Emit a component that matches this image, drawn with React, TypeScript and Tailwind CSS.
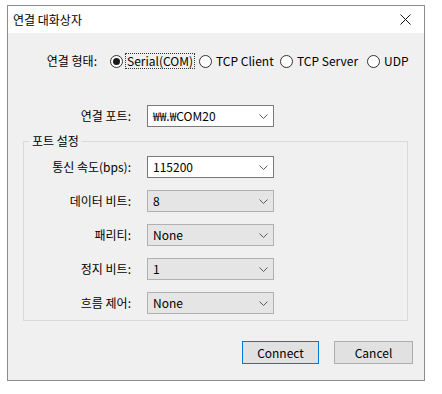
import React from "react";

const font = { fontFamily: '"Noto Sans CJK KR", "Noto Sans", sans-serif' };

function Chevron() {
  return (
    <svg width="9" height="5" viewBox="0 0 9 5" className="shrink-0">
      <path d="M0.5 0.5 L4.5 4.5 L8.5 0.5" fill="none" stroke="#5a5a5a" strokeWidth="1" />
    </svg>
  );
}

function Combo({ value, white }: { value: string; white?: boolean }) {
  return (
    <div
      className={
        "w-[127px] h-[22px] flex items-center justify-between pl-[5px] pr-[5px] border " +
        (white ? "bg-white border-[#7a7a7a]" : "bg-[#e5e5e5] border-[#b0b0b0]")
      }
    >
      <span className="leading-[16px]">{value}</span>
      <Chevron />
    </div>
  );
}

function Radio({ checked }: { checked?: boolean }) {
  return (
    <span className="w-[13px] h-[13px] rounded-full border border-[#333333] bg-white flex items-center justify-center shrink-0">
      {checked && <span className="w-[7px] h-[7px] rounded-full bg-[#1a1a1a]" />}
    </span>
  );
}

function Option({ label, checked, w, focus }: { label: string; checked?: boolean; w: string; focus?: boolean }) {
  return (
    <div className={"flex items-center " + w}>
      <Radio checked={checked} />
      <span
        className={
          "ml-[2px] leading-[14px] px-[1px] " +
          (focus ? "border border-dotted border-[#333333]" : "border border-transparent")
        }
      >
        {label}
      </span>
    </div>
  );
}

function Row({ label, value, white, first }: { label: string; value: string; white?: boolean; first?: boolean }) {
  return (
    <div className={"flex items-center " + (first ? "" : "mt-[12px]")}>
      <div className="w-[107px] text-right leading-[16px]">{label}</div>
      <div className="ml-[16px]">
        <Combo value={value} white={white} />
      </div>
    </div>
  );
}

export default function App() {
  return (
    <div className="w-[442px] h-[394px] bg-white pt-[5px] pl-[7px] text-[12px] text-black" style={font}>
      <div className="w-[418px] h-[376px] border border-[#8c8c8c] bg-[#f0f0f0] flex flex-col">
        <div className="h-[27px] bg-white flex items-center justify-between pl-[5px] pr-[13px]">
          <span className="leading-[16px]">연결 대화상자</span>
          <svg width="11" height="11" viewBox="0 0 11 11">
            <path d="M0.5 0.5 L10.5 10.5 M10.5 0.5 L0.5 10.5" stroke="#111" strokeWidth="1" />
          </svg>
        </div>

        <div className="flex items-center mt-[20px] h-[16px]">
          <div className="w-[89px] text-right leading-[16px]">연결 형태:</div>
          <div className="ml-[13px] flex items-center">
            <Option label="Serial(COM)" checked focus w="w-[89px]" />
            <Option label="TCP Client" w="w-[81px]" />
            <Option label="TCP Server" w="w-[87px]" />
            <Option label="UDP" w="w-[50px]" />
          </div>
        </div>

        <div className="flex items-center mt-[36px]">
          <div className="w-[123px] text-right leading-[16px]">연결 포트:</div>
          <div className="ml-[16px]">
            <Combo value="₩₩.₩COM20" white />
          </div>
        </div>

        <fieldset className="ml-[15px] w-[385px] mt-[6px] border border-[#d9d9d9] pb-[6px] pt-[7px]">
          <legend className="ml-[5px] px-[3px] leading-[16px]">포트 설정</legend>
          <Row label="통신 속도(bps):" value="115200" white first />
          <Row label="데이터 비트:" value="8" />
          <Row label="패리티:" value="None" />
          <Row label="정지 비트:" value="1" />
          <Row label="흐름 제어:" value="None" />
        </fieldset>

        <div className="flex justify-end pr-[11px] mt-[20px] gap-[15px]">
          <button className="w-[77px] h-[23px] border border-[#0078d7] bg-[#e1e1e1] leading-[16px]">Connect</button>
          <button className="w-[79px] h-[23px] border border-[#adadad] bg-[#e1e1e1] leading-[16px]">Cancel</button>
        </div>
      </div>
    </div>
  );
}
